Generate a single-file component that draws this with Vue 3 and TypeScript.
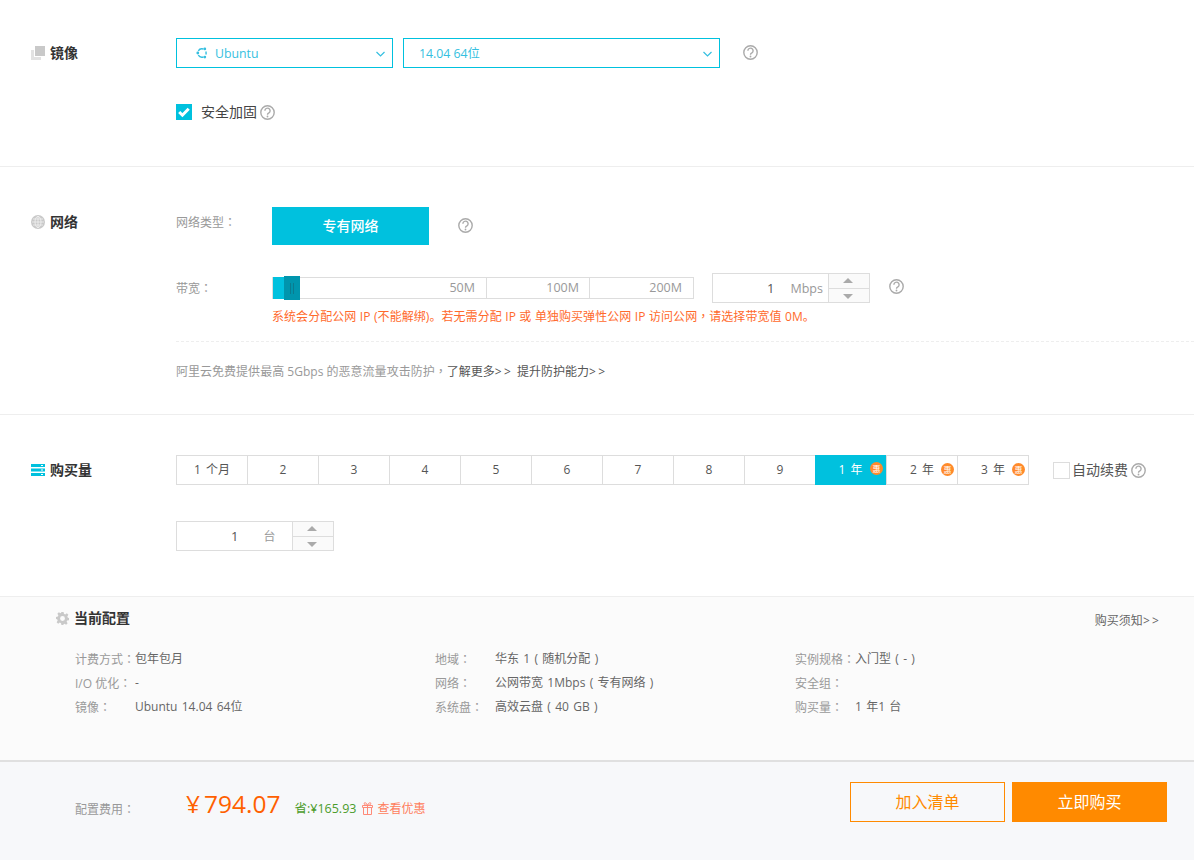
<script setup lang="ts">
const months = [
  { t: '1 个月' }, { t: '2' }, { t: '3' }, { t: '4' }, { t: '5' }, { t: '6' }, { t: '7' }, { t: '8' }, { t: '9' },
  { t: '1 年', hui: true, on: true }, { t: '2 年', hui: true }, { t: '3 年', hui: true }
]
const config = [
  [
    { k: '计费方式', v: '包年包月' },
    { k: 'I/O 优化', v: '-' },
    { k: '镜像', v: 'Ubuntu 14.04 64位' }
  ],
  [
    { k: '地域', v: '华东 1 ( 随机分配 )' },
    { k: '网络', v: '公网带宽 1Mbps ( 专有网络 )' },
    { k: '系统盘', v: '高效云盘 ( 40 GB )' }
  ],
  [
    { k: '实例规格', v: '入门型 ( - )' },
    { k: '安全组', v: '' },
    { k: '购买量', v: '1 年1 台' }
  ]
]
</script>

<template>
  <div class="page">
    <section class="sec s1">
      <div class="head">
        <svg class="hicon" width="14" height="14" viewBox="0 0 14 14"><path fill="#e2e2e2" d="M0 4h3v7h7v3H0z"/><path fill="#c9c9c9" d="M4 0h10v10H4z"/></svg>
        <b>镜像</b>
      </div>
      <div class="body">
        <div class="row selects">
          <div class="select w1">
            <svg class="ubuntu" width="12" height="12" viewBox="0 0 12 12" fill="none" stroke="#35bfe0" stroke-width="1.4"><path d="M2.300 3.800A4.300 4.300 0 0 1 7.400 2M7.400 10A4.300 4.300 0 0 1 2.300 8.200M9.800 4.400a4.300 4.300 0 0 1 0 3.200"/><circle cx="1.800" cy="6" r="1.400" fill="#35bfe0" stroke="none"/><circle cx="8.800" cy="1.900" r="1.400" fill="#35bfe0" stroke="none"/><circle cx="8.800" cy="10.100" r="1.400" fill="#35bfe0" stroke="none"/></svg>
            <span>Ubuntu</span>
            <svg class="chev" width="9" height="6" viewBox="0 0 9 6" fill="none" stroke="#35bfe0" stroke-width="1.2"><path d="M.5 1l4 4 4-4"/></svg>
          </div>
          <div class="select w2">
            <span>14.04 64位</span>
            <svg class="chev" width="9" height="6" viewBox="0 0 9 6" fill="none" stroke="#35bfe0" stroke-width="1.2"><path d="M.5 1l4 4 4-4"/></svg>
          </div>
          <svg class="help h-a" width="15" height="15" viewBox="0 0 15 15"><circle cx="7.500" cy="7.500" r="6.700" fill="none" stroke="#aaa" stroke-width="1.400"/><path d="M4.900 5.800a2.600 2.600 0 1 1 4 2.100c-.9.500-1.400 1-1.400 1.900" fill="none" stroke="#aaa" stroke-width="1.400"/><circle cx="7.500" cy="11.500" r=".9" fill="#aaa"/></svg>
        </div>
        <div class="row secure">
          <span class="check">
            <svg width="16" height="16" viewBox="0 0 16 16"><path d="M3.200 8l3.200 3.200 6.300-6.500" fill="none" stroke="#fff" stroke-width="3"/></svg>
          </span>
          <span class="secure-t">安全加固</span>
          <svg class="help" width="15" height="15" viewBox="0 0 15 15"><circle cx="7.500" cy="7.500" r="6.700" fill="none" stroke="#aaa" stroke-width="1.400"/><path d="M4.900 5.800a2.600 2.600 0 1 1 4 2.100c-.9.500-1.400 1-1.400 1.900" fill="none" stroke="#aaa" stroke-width="1.400"/><circle cx="7.500" cy="11.500" r=".9" fill="#aaa"/></svg>
        </div>
      </div>
    </section>

    <section class="sec s2">
      <div class="head">
        <svg class="hicon" width="14" height="14" viewBox="0 0 14 14"><circle cx="7" cy="7" r="7" fill="#c9c9c9"/><g fill="none" stroke="#f2f2f2" stroke-width=".8"><ellipse cx="7" cy="7" rx="3" ry="5.600"/><path d="M7 1v12M1 7h12M2 4h10M2 10h10"/></g></svg>
        <b>网络</b>
      </div>
      <div class="body">
        <div class="net-type">
          <span class="lab">网络类型<span class="pc">：</span></span>
          <span class="vpc">专有网络</span>
          <svg class="help h-b" width="15" height="15" viewBox="0 0 15 15"><circle cx="7.500" cy="7.500" r="6.700" fill="none" stroke="#aaa" stroke-width="1.400"/><path d="M4.900 5.800a2.600 2.600 0 1 1 4 2.100c-.9.500-1.400 1-1.400 1.900" fill="none" stroke="#aaa" stroke-width="1.400"/><circle cx="7.500" cy="11.500" r=".9" fill="#aaa"/></svg>
        </div>
        <div class="band">
          <span class="lab">带宽<span class="pc">：</span></span>
          <div class="slider">
            <i class="fill"></i>
            <i class="handle"></i>
            <span class="seg seg1">50M</span>
            <span class="seg seg2">100M</span>
            <span class="seg seg3">200M</span>
          </div>
          <div class="stepper mbps">
            <span class="num">1</span>
            <span class="unit">Mbps</span>
            <span class="arrows"><i class="up"></i><i class="down"></i></span>
          </div>
          <svg class="help h-c" width="15" height="15" viewBox="0 0 15 15"><circle cx="7.500" cy="7.500" r="6.700" fill="none" stroke="#aaa" stroke-width="1.400"/><path d="M4.900 5.800a2.600 2.600 0 1 1 4 2.100c-.9.500-1.400 1-1.400 1.900" fill="none" stroke="#aaa" stroke-width="1.400"/><circle cx="7.500" cy="11.500" r=".9" fill="#aaa"/></svg>
        </div>
        <p class="warn">系统会分配公网 IP (不能解绑)。若无需分配 IP 或 单独购买弹性公网 IP 访问公网<span class="pc">，</span>请选择带宽值 0M。</p>
        <div class="dash"></div>
        <p class="ddos">阿里云免费提供最高 5Gbps 的恶意流量攻击防护<span class="pc">，</span><span class="dk">了解更多<span class="gt">&gt;&gt;</span></span><span class="dk lnk">提升防护能力<span class="gt">&gt;&gt;</span></span></p>
      </div>
    </section>

    <section class="sec s3">
      <div class="head">
        <svg class="hicon" width="14" height="12" viewBox="0 0 14 12"><path fill="#00c1de" d="M0 0h14v3H0zM0 4.500h14v3H0zM0 9h14v3H0z"/><path fill="#fff" d="M10 1h2v1h-2zM10 5.500h2v1h-2zM10 10h2v1h-2z"/></svg>
        <b>购买量</b>
      </div>
      <div class="body">
        <div class="months-row">
          <div class="months">
            <span v-for="m in months" :key="m.t" class="month" :class="{ on: m.on }">
              {{ m.t }}<em v-if="m.hui" class="hui">惠</em>
            </span>
          </div>
          <span class="box"></span>
          <span class="auto">自动续费</span>
          <svg class="help" width="15" height="15" viewBox="0 0 15 15"><circle cx="7.500" cy="7.500" r="6.700" fill="none" stroke="#aaa" stroke-width="1.400"/><path d="M4.900 5.800a2.600 2.600 0 1 1 4 2.100c-.9.500-1.400 1-1.400 1.900" fill="none" stroke="#aaa" stroke-width="1.400"/><circle cx="7.500" cy="11.500" r=".9" fill="#aaa"/></svg>
        </div>
        <div class="stepper qty">
          <span class="num">1</span>
          <span class="unit">台</span>
          <span class="arrows"><i class="up"></i><i class="down"></i></span>
        </div>
      </div>
    </section>

    <section class="config">
      <div class="cfg-top">
        <svg width="13" height="13" viewBox="0 0 24 24"><path fill="#c9c9c9" fill-rule="evenodd" d="M10 0h4l.7 3.400 2.300 1 3-1.900 2.800 2.800-1.900 3 1 2.300L24 11v4l-3.400.6-1 2.300 1.900 3-2.800 2.800-3-1.900-2 .8L14 24h-4l-.7-3.400-2.300-1-3 1.900-2.800-2.800 1.900-3-1-2.300L0 13V9l3.400-.6 1-2.300-1.900-3L5.300.3l3 1.900 1-.8zM12 7.500a4.500 4.500 0 1 0 0 9 4.500 4.500 0 0 0 0-9z"/></svg>
        <b>当前配置</b>
        <span class="notice">购买须知<span class="gt">&gt;&gt;</span></span>
      </div>
      <div class="cfg-grid">
        <div v-for="(col, i) in config" :key="i" class="cfg-col">
          <div v-for="r in col" :key="r.k" class="cfg-row">
            <span class="k">{{ r.k }}<span class="pc">：</span></span><span class="v">{{ r.v }}</span>
          </div>
        </div>
      </div>
    </section>

    <footer class="foot">
      <span class="fee">配置费用<span class="pc">：</span></span>
      <span class="price"><span class="yen">¥</span>794.07</span>
      <span class="save">省:¥165.93</span>
      <svg class="gift" width="11" height="14" viewBox="0 0 11 14" fill="none" stroke="#ff8a78" stroke-width="1"><path d="M.5 4.500h10v2H.5zM1.500 6.500v7h8v-7M5.500 4.500v9M5.500 4.300C4 1 1.800 1 2.300 3c.2.900 1.700 1.300 3.200 1.300zM5.500 4.300C7 1 9.200 1 8.700 3c-.2.900-1.700 1.300-3.200 1.300z"/></svg>
      <span class="offer">查看优惠</span>
      <span class="spacer"></span>
      <span class="btn ghost">加入清单</span>
      <span class="btn solid">立即购买</span>
    </footer>
  </div>
</template>

<style>
html, body { margin: 0; background: #fff; }
</style>

<style scoped>
.page {
  width: 1194px;
  height: 860px;
  overflow: hidden;
  font-family: "Open Sans", "Noto Sans CJK SC", sans-serif;
  font-size: 12px;
  color: #666;
}
p { margin: 0; }
i, em { font-style: normal; display: block; }
.pc { font-family: "Noto Sans CJK TC", sans-serif; }
.gt { letter-spacing: 2.2px; }
.sec { display: flex; box-sizing: border-box; border-bottom: 1px solid #eee; padding-left: 31px; }
.head { width: 145px; flex: none; display: flex; align-items: center; height: 30px; font-size: 14px; color: #333; }
.head b { font-weight: 700; margin: 0 0 2px 5px; }
.hicon { flex: none; }
.body { flex: 1; min-width: 0; }
.s1 { height: 167px; padding-top: 38px; }
.row { display: flex; align-items: center; }
.selects { height: 30px; }
.select {
  box-sizing: border-box; height: 30px; border: 1px solid #00c1de; display: flex; align-items: center;
  color: #35bfe0; font-size: 12.3px; position: relative;
}
.w1 { width: 217px; padding-left: 19px; }
.w2 { width: 317px; margin-left: 10px; padding-left: 15px; }
.ubuntu { margin-right: 7px; }
.chev { position: absolute; right: 7px; top: 12px; }
.help { flex: none; display: block; }
.h-a { margin: -2px 0 0 23px; }
.secure { margin-top: 36px; height: 16px; }
.check { width: 16px; height: 16px; background: #00c1de; display: block; flex: none; }
.secure-t { margin: 0 3px 2px 9px; font-size: 14px; color: #444; }
.s2 { height: 248px; padding-top: 40px; }
.s2 .head { height: 30px; }
.lab { width: 96px; flex: none; color: #999; }
.net-type { display: flex; align-items: flex-start; height: 38px; }
.net-type .lab { line-height: 30px; }
.vpc {
  width: 157px; height: 38px; background: #00c1de; color: #fff; font-size: 14px; font-weight: 500;
  text-align: center; line-height: 38px;
}
.h-b { margin: 11px 0 0 29px; }
.band { display: flex; align-items: flex-start; margin-top: 28px; height: 30px; }
.band .lab { line-height: 30px; }
.slider {
  position: relative; box-sizing: border-box; margin-top: 4px; width: 422px; height: 22px;
  border: 1px solid #ddd; display: flex; color: #999; line-height: 20px;
}
.seg { box-sizing: border-box; text-align: right; padding-right: 11px; border-right: 1px solid #ddd; font-size: 12.5px; }
.seg1 { width: 214px; }
.seg2 { width: 103px; padding-right: 10px; }
.seg3 { width: 103px; border-right: 0; }
.fill { position: absolute; left: 0; top: -1px; width: 16px; height: 22px; background: #00c1de; }
.handle {
  position: absolute; left: 11px; top: -2px; width: 16px; height: 24px; background: #0095ad;
  background-image: linear-gradient(90deg, #0a7b8f 1px, transparent 1px, transparent 3px, #0a7b8f 3px, #0a7b8f 4px, transparent 4px);
  background-size: 4px 11px; background-position: 6px 7px; background-repeat: no-repeat;
}
.stepper {
  box-sizing: border-box; position: relative; width: 158px; height: 30px; border: 1px solid #ddd;
  display: flex; align-items: center;
}
.mbps { margin-left: 18px; }
.num { color: #555; font-size: 13px; }
.unit { color: #999; font-size: 12.5px; }
.mbps .num { margin-left: 54px; }
.mbps .unit { margin-left: 16px; }
.qty .num { margin-left: 54px; }
.qty .unit { margin-left: 25px; font-size: 12px; }
.arrows {
  position: absolute; right: 0; top: 0; bottom: 0; width: 40px; border-left: 1px solid #ddd;
  background: #fafafa; display: flex; flex-direction: column;
}
.up, .down { flex: 1; position: relative; }
.up { border-bottom: 1px solid #ddd; }
.up::after, .down::after {
  content: ""; position: absolute; left: 14px; top: 4px; border: 5px solid transparent;
}
.up::after { border-top: 0; border-bottom: 5px solid #aaa; }
.down::after { border-bottom: 0; border-top: 5px solid #aaa; top: 5px; }
.h-c { margin: 6px 0 0 19px; }
.warn { margin: 4px 0 0 96px; color: #ff6a2c; line-height: 18px; white-space: nowrap; letter-spacing: .055px; word-spacing: .3px; }
.dash { margin-top: 15px; border-top: 1px dashed #eee; }
.ddos { margin-top: 20px; color: #999; line-height: 18px; white-space: nowrap; letter-spacing: .02px; }
.dk { color: #555; }
.lnk { margin-left: 4px; }
.s3 { height: 182px; padding-top: 40px; }
.months-row { display: flex; align-items: center; height: 30px; }
.months { display: flex; border: 1px solid #ddd; box-sizing: border-box; height: 30px; width: 853px; }
.month {
  width: 71px; box-sizing: border-box; border-right: 1px solid #ddd; text-align: center;
  line-height: 28px; color: #555; position: relative; flex: none; word-spacing: 2px;
}
.month:last-child { border-right: 0; width: 70px; }
.month.on { background: #00c1de; color: #fff; margin: -1px 0 -1px -1px; width: 72px; height: 30px; line-height: 30px; border-right-color: #ddd; }
.hui {
  position: absolute; right: 3px; top: 7px; width: 13px; height: 13px; border-radius: 50%;
  background: #ff8a2a; color: #fff; font-size: 8px; line-height: 13px; text-align: center;
}
.box { width: 17px; height: 17px; box-sizing: border-box; border: 1px solid #ddd; margin: 0 2px 0 24px; flex: none; }
.auto { font-size: 14px; color: #555; margin: 0 3px 2px 0; }
.qty { margin-top: 36px; }
.config { height: 163px; box-sizing: border-box; background: #fbfbfb; padding: 12px 0 0 56px; }
.cfg-top { display: flex; align-items: center; height: 18px; font-size: 14px; color: #333; padding-right: 33px; }
.cfg-top b { margin: 0 0 2px 5px; font-weight: 700; }
.notice { margin: 4px 0 0 auto; font-size: 12px; color: #666; }
.cfg-grid { display: flex; margin: 20px 0 0 19px; }
.cfg-col { width: 360px; flex: none; }
.cfg-row { display: flex; height: 24px; line-height: 24px; }
.k { width: 60px; color: #999; flex: none; white-space: nowrap; }
.v { color: #666; white-space: nowrap; word-spacing: 1.2px; }
.foot {
  height: 100px; box-sizing: border-box; background: #f7f8fa; border-top: 2px solid #e0e0e0;
  display: flex; align-items: flex-start; padding: 20px 27px 0 75px;
}
.fee { color: #999; margin-top: 18px; width: 111px; flex: none; }
.price { color: #ff6000; font-size: 24.5px; line-height: 44px; margin-top: 0; }
.yen { margin-right: 4px; }
.save { color: #4b9c2a; margin: 18px 0 0 14px; line-height: 17px; font-size: 12.5px; }
.gift { margin: 19px 4px 0 6px; flex: none; }
.offer { color: #ff7d5c; margin-top: 18px; line-height: 17px; }
.spacer { flex: 1; }
.btn { box-sizing: border-box; width: 155px; height: 40px; line-height: 38px; text-align: center; font-size: 16px; flex: none; }
.ghost { border: 1px solid #ff8a00; color: #ff8a00; }
.solid { background: #ff8a00; color: #fff; margin-left: 7px; line-height: 40px; }
</style>
